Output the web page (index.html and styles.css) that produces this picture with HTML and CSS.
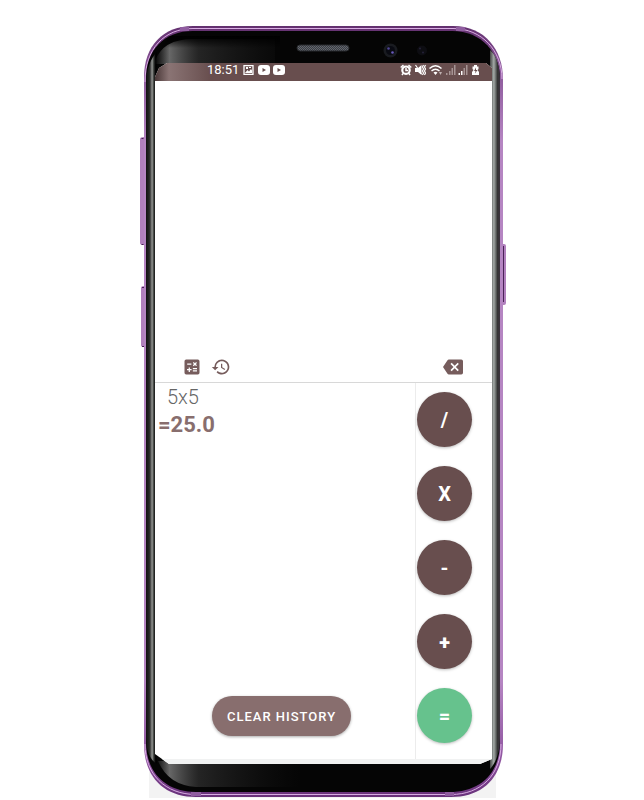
FILE: index.html
```
<!DOCTYPE html>
<html lang="en">
<head>
<meta charset="utf-8">
<meta name="viewport" content="width=device-width, initial-scale=1">
<title>Calculator</title>
<link rel="stylesheet" href="styles.css">
</head>
<body>
<main class="phone">
  <svg class="frame" viewBox="140 25 366 773" preserveAspectRatio="none" aria-hidden="true">
    <defs>
      <linearGradient id="rim" x1="0" y1="0" x2="0" y2="1">
        <stop offset="0" stop-color="#63306f"/><stop offset=".06" stop-color="#8d5a9c"/><stop offset=".15" stop-color="#b585c2"/>
        <stop offset=".85" stop-color="#b585c2"/><stop offset=".95" stop-color="#8f55a0"/><stop offset="1" stop-color="#68317a"/>
      </linearGradient>
      <linearGradient id="edgeLeft">
        <stop offset="0" stop-color="#111"/><stop offset=".3" stop-color="#252825"/><stop offset=".45" stop-color="#555"/>
        <stop offset=".55" stop-color="#999b98"/><stop offset=".7" stop-color="#3d403d"/><stop offset=".85" stop-color="#050505"/><stop offset="1" stop-color="#000"/>
      </linearGradient>
      <linearGradient id="edgeRight">
        <stop offset="0" stop-color="#444"/><stop offset=".2" stop-color="#747876"/><stop offset=".38" stop-color="#a4aaa7"/>
        <stop offset=".6" stop-color="#626664"/><stop offset=".75" stop-color="#353535"/><stop offset="1" stop-color="#3b333d"/>
      </linearGradient>
      <linearGradient id="glare">
        <stop offset="0" stop-color="#777" stop-opacity="0"/><stop offset=".1" stop-color="#888" stop-opacity=".75"/>
        <stop offset=".3" stop-color="#444" stop-opacity=".5"/><stop offset="1" stop-color="#222" stop-opacity="0"/>
      </linearGradient>
      <linearGradient id="fadeY" x1="0" y1="0" x2="0" y2="1">
        <stop offset="0" stop-color="#000"/><stop offset="1" stop-color="#000" stop-opacity="0"/>
      </linearGradient>
      <pattern id="mesh" width="2" height="2" patternUnits="userSpaceOnUse">
        <path fill="#3a3d43" d="M0 0h2v2H0z"/><path fill="#62666e" d="M0 0h1v1H0zM1 1h1v1H1z"/>
      </pattern>
    </defs>
    <path fill="#f3f3f3" d="M149 740h347v58H149z"/>
    <path fill="#b180bd" d="M140 139q0-2 4-2v108q-4 0-4-2zM141 288q0-2 3-2v61q-3 0-3-2zM502 244h2q2 0 2 2v57q0 2-2 2h-2z"/>
    <path stroke="#4a2257" d="M141.500 138.500h2M141.500 244.500h2M142 287.500h2M142 346.500h2M503.500 246v56"/>
    <path fill="url(#rim)" d="M193 26H453C485 26 503 50 503 79V744C503 777 483 797 451 797H196C164 797 144 777 144 744V77C144 46 163 26 193 26Z"/>
    <path fill="none" stroke="#d9ade3" d="M193 28.500H453C482 28.500 502 51 502 79M145 744C145 774 165 794.500 196 794.500H451C481 794.500 501 775 501 744M145 82C145 49 164 28.500 193 28.500"/>
    <path fill="#050505" d="M193 31H452C482 31 500 53 500 79V742C500 774 480 792 449 792H196C166 792 146 773 146 742V79C146 50 164 31 193 31Z"/>
    <path fill="url(#edgeLeft)" d="M146 84C146 69 151 58 157 52V764C150 760 146 750 146 738Z"/>
    <path fill="url(#edgeRight)" d="M490 50C497 56 500 68 500 80V738C500 751 496 763 490 769Z"/>
    <path fill="url(#glare)" d="M155 61Q163 39 193 39H275V64H155ZM158 761H300V787H196Q168 785 158 761Z"/>
    <path fill="url(#fadeY)" d="M170 36H280V48H160Z"/>
    <path fill="#905da0" d="M180 27h9v4h-9zM456 27h9v4h-9zM191 792h10v4h-10zM445 792h9v4h-9z"/>
    <rect x="297" y="45" width="52" height="6" rx="3" fill="url(#mesh)" stroke="#292b2e"/>
    <circle cx="390.500" cy="50.500" r="7" fill="#191b20"/>
    <circle cx="390.500" cy="50.500" r="4.500" fill="#090a12"/>
    <circle cx="388.500" cy="48.500" r="1.300" fill="#514696"/><circle cx="392.500" cy="52.500" r="1.300" fill="#695abc"/>
    <circle cx="422" cy="50.500" r="5" fill="#0d0d12"/><circle cx="420" cy="48.500" r="1" fill="#25213a"/><circle cx="423" cy="52.500" r="1" fill="#25213a"/>
  </svg>

  <div class="screen">
    <header class="status">
      <div class="status-group">
        <time>18:51</time>
        <svg class="notices" viewBox="0 0 43 12" aria-hidden="true">
          <path fill="none" stroke="#fff" stroke-width="1.300" d="M1 1.700h9v8.600H1z"/>
          <path fill="#fff" d="M2 9l2.500-3 1.500 1.400L8 5l1 1.500V9zM3 3h2v2H3zM6 3h2v1H6z"/>
          <rect x="15" y="1" width="12" height="10" rx="3" fill="#fff"/><path fill="#684e4e" d="M19.500 4v4l3.500-2z"/>
          <rect x="30" y="1" width="12" height="10" rx="3" fill="#fff"/><path fill="#684e4e" d="M34.500 4v4l3.500-2z"/>
        </svg>
      </div>
      <svg class="signals" viewBox="0 0 80 12" aria-hidden="true">
        <circle cx="6" cy="6.200" r="3.700" fill="none" stroke="#fff" stroke-width="2.200"/>
        <path fill="none" stroke="#fff" stroke-width="1.500" d="M.7 3.500l2.800-2.500M11.300 3.500L8.500 1M3 9.500l-1 1.500M9 9.500l1 1.500M6 4v2.500h2"/>
        <path fill="#fff" d="M15 4h3l3.500-3v10L18 8h-3z"/>
        <path fill="none" stroke="#fff" stroke-width="1.200" d="M15.500 1l6 9M23.500 1l-1 2 1 2-1 2 1 2-1 2M25.500 1l-1 2 1 2-1 2 1 2-1 2"/>
        <path fill="none" stroke="#fff" stroke-width="1.500" d="M29.500 4.500Q35.500-1 41.500 4.500M31.500 7Q35.500 3.500 39.500 7"/>
        <path fill="#fff" d="M33.500 8.500q2-1.500 4 0l-2 2.500z"/><path fill="#c0b2b2" d="M39 8h3l-1.500 3z"/>
        <path fill="#a69494" d="M46 9h1.500v2H46zM49 7h1.500v4H49zM51.500 4H53v7h-1.500zM54 1h1.500v10H54zM63.500 4H65v7h-1.500zM66 1h1.500v10H66z"/>
        <path fill="#fff" d="M58.500 9H60v2h-1.500zM61 7h1.500v4H61z"/>
        <path fill="#fff" d="M74 1h3v1.500h1.500V5l-1 1 1.500 2v3h-7V8l1.500-2-1-1V2.500H74z"/><path fill="#684e4e" d="M76 3.500l-2 3.500h1.500l-.5 2.500L77.500 6H76z"/>
      </svg>
    </header>

    <section class="display" aria-label="Display">
      <div class="tools">
        <button class="tool" type="button" aria-label="Scientific keypad">
          <svg viewBox="0 0 24 24"><path d="M19 3H5a2 2 0 0 0-2 2v14a2 2 0 0 0 2 2h14a2 2 0 0 0 2-2V5a2 2 0 0 0-2-2zm-5.970 4.060L14.090 6l1.410 1.410L16.910 6l1.060 1.060-1.410 1.410 1.410 1.410-1.060 1.060-1.410-1.400-1.410 1.410-1.060-1.060 1.410-1.410-1.410-1.420zM6.250 7.720h5v1.500h-5v-1.500zM11.500 16h-2v2H8v-2H6v-1.500h2v-2h1.500v2h2V16zm6.500 1.250h-5v-1.500h5v1.500zm0-2.500h-5v-1.500h5v1.500z"/></svg>
        </button>
        <button class="tool" type="button" aria-label="History">
          <svg viewBox="0 0 24 24"><path d="M13 3a9 9 0 0 0-9 9H1l3.890 3.890.070.140L9 12H6c0-3.870 3.130-7 7-7s7 3.130 7 7-3.130 7-7 7c-1.930 0-3.680-.790-4.940-2.060l-1.420 1.420A9 9 0 1 0 13 3zm-1 5v5l4.280 2.540.720-1.210-3.500-2.080V8H12z"/></svg>
        </button>
        <button class="tool tool-delete" type="button" aria-label="Delete">
          <svg viewBox="0 0 24 24"><path d="M22 3H7c-.690 0-1.230.350-1.590.880L0 12l5.410 8.110c.360.530.900.890 1.590.890h15a2 2 0 0 0 2-2V5a2 2 0 0 0-2-2zm-3 12.590L17.590 17 14 13.410 10.410 17 9 15.590 12.590 12 9 8.410 10.410 7 14 10.590 17.590 7 19 8.410 15.410 12 19 15.590z"/></svg>
        </button>
      </div>
    </section>

    <section class="panel">
      <div class="history">
        <p class="expression">5x5</p>
        <p class="result">=25.0</p>
        <button class="clear" type="button">CLEAR HISTORY</button>
      </div>
      <div class="keys">
        <button class="key" type="button">/</button>
        <button class="key" type="button">X</button>
        <button class="key" type="button">-</button>
        <button class="key key-plus" type="button">+</button>
        <button class="key key-equals" type="button">=</button>
      </div>
    </section>
    <div class="navigation"></div>
  </div>
</main>
</body>
</html>
```

FILE: styles.css
```
* { box-sizing: border-box; }

body {
  margin: 0;
  min-height: 100vh;
  display: flex;
  padding: 25px 138px 2px 140px;
  background: #fff;
  font-family: Roboto, "Liberation Sans", sans-serif;
}

button {
  border: 0;
  padding: 0;
  font: inherit;
  cursor: pointer;
}

.phone {
  position: relative;
  flex: 1;
  display: flex;
  padding: 38px 14px 34px 15px;
}

.frame {
  position: absolute;
  inset: 0;
  width: 100%;
  height: 100%;
}

.screen {
  position: relative;
  flex: 1;
  display: grid;
  grid-template-rows: 18px 302fr 376fr 5px;
  background: #fff;
  clip-path: polygon(0 14px, 4px 5px, 12px 0, calc(100% - 6px) 0, 100% 5px, 100% calc(100% - 5px), calc(100% - 12px) 100%, 14px 100%, 0 calc(100% - 10px));
}

.status {
  display: flex;
  align-items: center;
  justify-content: space-between;
  padding: 0 12px 4px 52px;
  background: linear-gradient(90deg, #493737, #8a7474 14px, #684e4e 56px);
  color: #fff;
  font-size: 12px;
  line-height: 14px;
}

.status time { font-size: 13px; }

.status-group {
  display: flex;
  align-items: center;
  gap: 4px;
}

.notices { width: 43px; height: 12px; }
.signals { width: 80px; height: 12px; }

.display {
  display: flex;
  flex-direction: column;
  justify-content: flex-end;
  border-bottom: 1px solid #d8d8d8;
}

.tools {
  display: flex;
  gap: 9px;
  padding: 0 29px 5px 27px;
}

.tool {
  width: 20px;
  height: 20px;
  background: none;
}

.tool svg {
  display: block;
  fill: #765c5c;
}

.tool-delete { margin-left: auto; }

.panel {
  display: grid;
  grid-template-columns: 1fr 77px;
}

.history {
  display: flex;
  flex-direction: column;
  padding: 0 10px 23px 3px;
}

.expression,
.result {
  margin: 0;
  line-height: 28px;
}

.expression {
  padding-left: 9px;
  color: #666;
  font-size: 20px;
  font-weight: 300;
}

.result {
  color: #886e6e;
  font-size: 22px;
  font-weight: 700;
}

.clear {
  align-self: center;
  margin: auto 0 0;
  width: 139px;
  height: 40px;
  border-radius: 20px;
  background: #886e6e;
  box-shadow: 0 1px 3px #0005;
  color: #fff;
  font-size: 13px;
  font-weight: 500;
  letter-spacing: 1px;
}

.keys {
  display: flex;
  flex-direction: column;
  gap: 19px;
  padding: 9px 0 0 1px;
  border-left: 1px solid #ececec;
}

.key {
  width: 55px;
  height: 55px;
  border-radius: 50%;
  background: #684e4e;
  box-shadow: 0 1px 3px #0004;
  color: #fff;
  font-size: 20px;
  font-weight: 700;
}

.key-plus { font-weight: 900; }
.key-equals { background: #66c28d; }

.navigation { background: #f1f2f2; }
```
